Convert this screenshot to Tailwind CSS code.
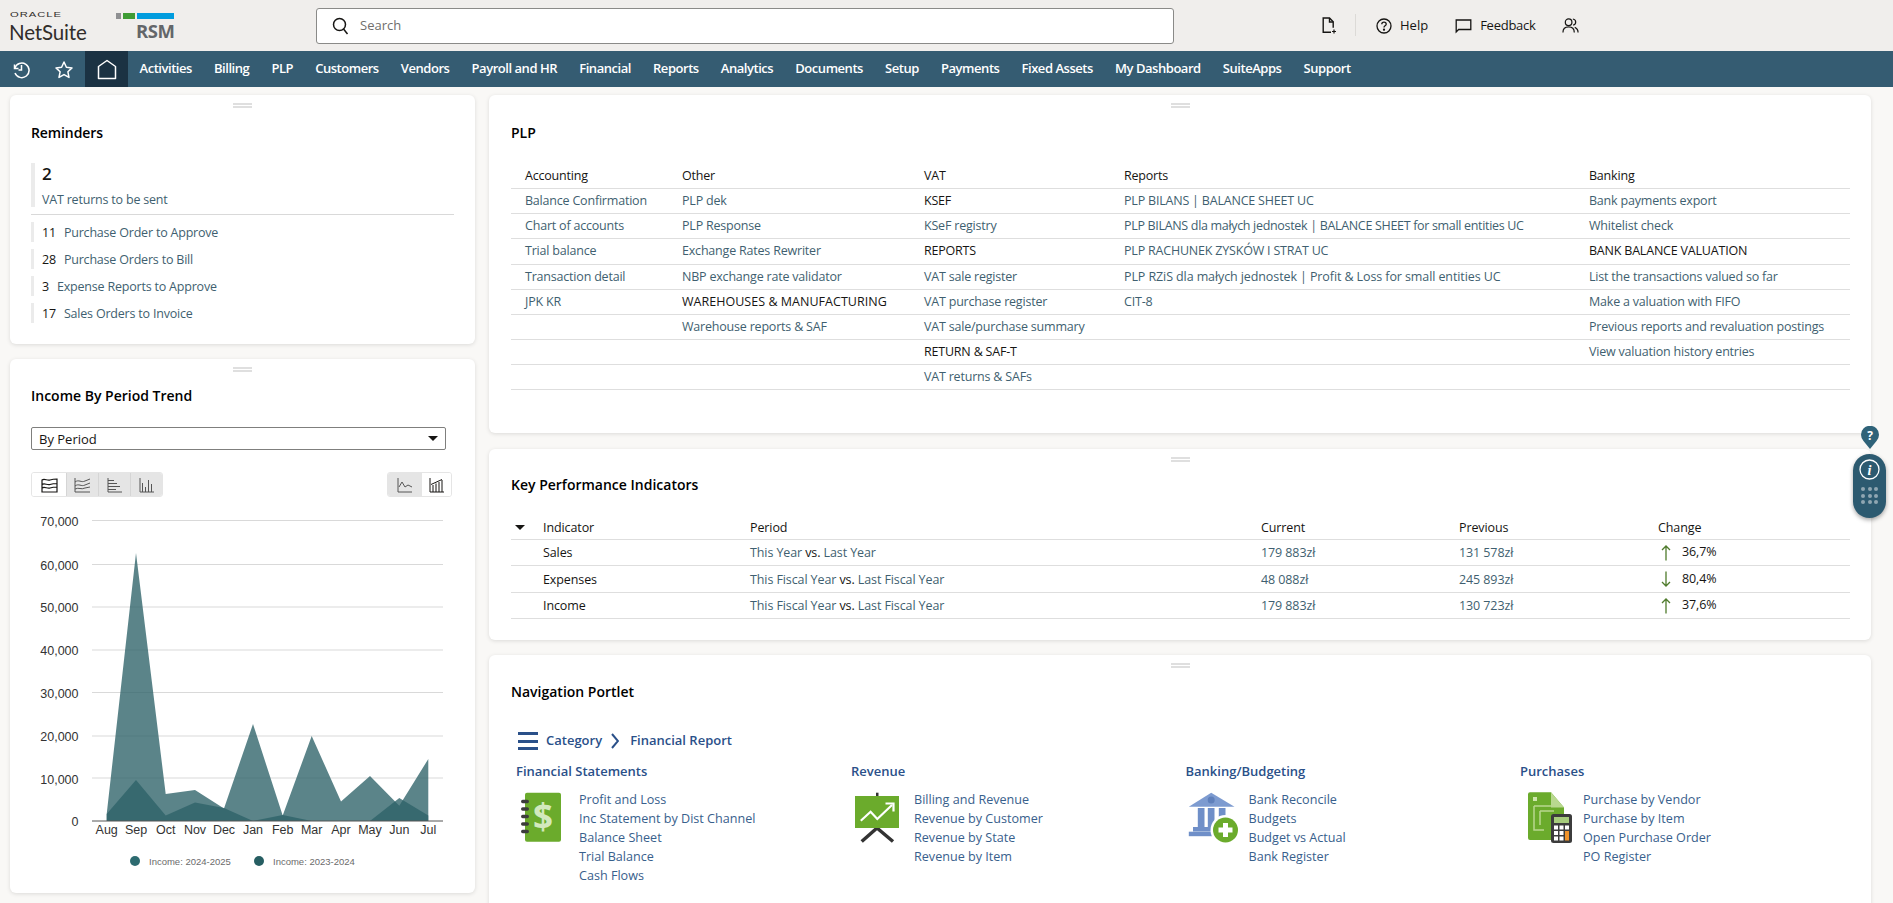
<!DOCTYPE html>
<html lang="en">
<head>
<meta charset="utf-8">
<title>NetSuite Home</title>
<script src="https://cdn.jsdelivr.net/npm/@tailwindcss/browser@4"></script>
</head>
<body class="h-[903px] overflow-hidden bg-[#f9f8f6] font-['Open_Sans',sans-serif] text-[13px] text-[#161513] relative">
<!-- top bar -->
<header class="h-[51px] bg-[#f0eeec] flex items-center relative">
  <div class="w-[316px] h-full relative shrink-0 flex">
    <div class="ml-[10px] mt-[10.5px] flex flex-col">
      <span class="font-['Liberation_Sans',sans-serif] text-[8px] leading-[8px] tracking-[0.7px] text-[#312d2a] scale-x-[1.4] origin-left">ORACLE</span>
      <span class="-ml-[1px] font-['Lato',sans-serif] text-[20.5px] leading-[22px] tracking-[-0.15px] text-[#312d2a] mt-[2.500px]">NetSuite</span>
    </div>
    <div class="absolute left-[116px] top-[13px] flex gap-[2px]">
      <i class="block w-[5px] h-[6px] bg-[#8f9092]"></i><i class="block w-[12px] h-[6px] bg-[#3f9c35]"></i><i class="block w-[37px] h-[6px] bg-[#009cde]"></i>
    </div>
    <span class="absolute left-[136px] top-[20px] font-['Open_Sans',sans-serif] font-bold text-[18.5px] leading-[22px] tracking-[-0.4px] text-[#63666a]">RSM</span>
  </div>
  <div class="w-[858px] h-[36px] bg-white border border-[#8a8a88] rounded-[3px] flex items-center shrink-0">
    <svg class="ml-[15px]" width="17" height="18" viewBox="0 0 17 18" fill="none" stroke="#161513" stroke-width="1.5"><circle cx="7.5" cy="7.5" r="6"/><path d="M11.5 12l4 5"/></svg>
    <span class="ml-[11px] text-[#6f6e6c] text-[13px]">Search</span>
  </div>
  <div class="absolute left-[1322px] top-[17px] w-[15px] h-[17px]">
    <svg width="15" height="17" viewBox="0 0 15 17" fill="none" stroke="#161513" stroke-width="1.4"><path d="M9 15.300H1.200V1h6.300l3.700 3.700v6"/><path d="M7.500 1v4h3.700"/><path d="M12 12.500v4M10 14.500h4" stroke-width="1.200"/></svg>
  </div>
  <div class="absolute left-[1355px] top-[14px] w-px h-[22px] bg-[#dcdad7]"></div>
  <div class="absolute left-[1376px] top-[0px] h-[51px] flex items-center">
    <svg width="16" height="16" viewBox="0 0 16 16" fill="none" stroke="#161513" stroke-width="1.3"><circle cx="8" cy="8" r="7"/><path d="M5.800 6.200c0-1.200 1-2 2.200-2s2.200.8 2.200 2c0 1.600-2.200 1.700-2.200 3.300"/><circle cx="8" cy="11.700" r=".5" fill="#161513"/></svg>
    <span class="ml-[8px] font-medium text-[13px]">Help</span>
    <svg class="ml-[27px]" width="17" height="16" viewBox="0 0 17 16" fill="none" stroke="#161513" stroke-width="1.3"><path d="M1.200 14V2h14.600v9.500H3.600L1.200 14z"/></svg>
    <span class="ml-[8px] font-medium text-[13px] tracking-[-0.25px]">Feedback</span>
    <svg class="ml-[26px]" width="17" height="17" viewBox="0 0 18 17" fill="none" stroke="#161513" stroke-width="1.3"><circle cx="7" cy="5" r="3.500"/><path d="M1 16c0-4 2.500-6 6-6s6 2 6 6"/><path d="M11.500 1.600c2 .3 3 1.700 3 3.300s-1 3-2.700 3.300M13.500 10.500c2 .8 3.500 2.500 3.500 5.500"/></svg>
  </div>
</header>

<!-- nav -->
<nav class="h-[36px] bg-[#355c72] flex items-center text-white font-semibold text-[13px]">
  <div class="w-[42px] flex justify-center">
    <svg width="19" height="19" viewBox="0 0 19 19" fill="none" stroke="#fff" stroke-width="1.5"><path d="M2.500 4.500v4h4"/><path d="M2.800 8.200A7.300 7.300 0 1 1 3 13"/><path d="M9.500 5v5H6.500"/></svg>
  </div>
  <div class="w-[43px] flex justify-center">
    <svg width="20" height="19" viewBox="0 0 20 19" fill="none" stroke="#fff" stroke-width="1.5"><path d="M10 2l2.400 5.200 5.600.7-4.100 3.900 1.100 5.600L10 14.600l-5 2.800 1.100-5.600L2 7.900l5.600-.7z" stroke-linejoin="round"/></svg>
  </div>
  <div class="w-[43px] h-full bg-[#1b3243] flex items-center justify-center">
    <svg width="20" height="21" viewBox="0 0 20 21" fill="none" stroke="#fff" stroke-width="1.5"><path d="M1.500 19.500V7.500L10 1.500l8.500 6v12z" stroke-linejoin="round"/></svg>
  </div>
  <div class="ml-[11.5px] flex gap-[22.1px] tracking-[-0.46px] whitespace-nowrap">
    <span>Activities</span><span>Billing</span><span>PLP</span><span>Customers</span><span>Vendors</span><span>Payroll and HR</span><span>Financial</span><span>Reports</span><span>Analytics</span><span>Documents</span><span>Setup</span><span>Payments</span><span>Fixed Assets</span><span>My Dashboard</span><span>SuiteApps</span><span>Support</span>
  </div>
</nav>

<!-- dashboard -->
<main class="flex gap-[14px] pl-[10px] pt-[8px]">
  <div class="w-[465px] shrink-0 flex flex-col gap-[15px]">
    <!-- Reminders -->
    <section class="h-[249px] bg-white rounded-[6px] shadow-[0_1px_4px_rgba(0,0,0,0.12)] pt-[8px] px-[21px]">
      <div class="h-[5px] w-[19px] mx-auto border-y-2 border-[#dfdfdf]"></div>
      <h2 class="mt-[15px] h-[20px] leading-[20px] text-[14px] font-semibold tracking-[-0.1px] text-black">Reminders</h2>
      <div class="mt-[20px] h-[44px] border-l-4 border-[#ebebeb] pl-[7px]">
        <div class="h-[22px] text-[17px] leading-[22px] font-semibold">2</div>
        <div class="mt-[5px] h-[19px] leading-[19px] text-[12.5px] text-[#3f5f70] tracking-[-0.2px]">VAT returns to be sent</div>
      </div>
      <div class="mt-[7px] border-t border-[#d9d9d9]"></div>
      <ul class="mt-[7px] flex flex-col gap-[7px] text-[12.5px] tracking-[-0.2px]">
        <li class="h-[20px] leading-[22px] border-l-[3px] border-[#ebebeb] pl-[8px]"><span>11</span><a class="ml-[8px] text-[#3f5f70]">Purchase Order to Approve</a></li>
        <li class="h-[20px] leading-[22px] border-l-[3px] border-[#ebebeb] pl-[8px]"><span>28</span><a class="ml-[8px] text-[#3f5f70]">Purchase Orders to Bill</a></li>
        <li class="h-[20px] leading-[22px] border-l-[3px] border-[#ebebeb] pl-[8px]"><span>3</span><a class="ml-[8px] text-[#3f5f70]">Expense Reports to Approve</a></li>
        <li class="h-[20px] leading-[22px] border-l-[3px] border-[#ebebeb] pl-[8px]"><span>17</span><a class="ml-[8px] text-[#3f5f70]">Sales Orders to Invoice</a></li>
      </ul>
    </section>
    <!-- Income -->
    <section class="h-[534px] bg-white rounded-[6px] shadow-[0_1px_4px_rgba(0,0,0,0.12)] pt-[8px] px-[21px]">
      <div class="h-[5px] w-[19px] mx-auto border-y-2 border-[#dfdfdf]"></div>
      <h2 class="mt-[14px] h-[20px] leading-[20px] text-[14px] font-semibold text-black">Income By Period Trend</h2>
      <div class="mt-[21px] w-[415px] h-[23px] border border-[#7f7f7d] rounded-[2px] flex items-center justify-between pl-[7px] pr-[7px] text-[13px]">
        <span class="pt-[3px]">By Period</span>
        <span class="w-0 h-0 border-x-[5px] border-t-[5px] border-x-transparent border-t-[#161513]"></span>
      </div>
      <div class="mt-[22px] flex justify-between w-[421px]">
        <div class="h-[25px] w-[132px] flex rounded-[3px] overflow-hidden border border-[#e5e5e5]">
          <span class="w-[34px] bg-white flex items-center justify-center"><svg width="17" height="16" viewBox="0 0 17 16" fill="none" stroke="#161513" stroke-width="1.2"><path d="M1 15V3c2.500-2 5 1 8 0s5-1 7-1v13zM1 7.500c2.500-2 5 1 8 0s5-1 7-1M1 11c2.500-2 5 1 8 0s5-1 7-1"/></svg></span>
          <span class="w-[32px] bg-[#e5e5e5] border-l border-[#d5d5d5] flex items-center justify-center"><svg width="17" height="16" viewBox="0 0 17 16" fill="none" stroke="#555" stroke-width="1"><path d="M1 1v14h15M1 5c4-3 6 1 10-1l5-2M1 9c4-3 6 1 10-1l5-2M1 12c4-2 6 1 10-1l5-1"/></svg></span>
          <span class="w-[32px] bg-[#e5e5e5] border-l border-[#d5d5d5] flex items-center justify-center"><svg width="16" height="16" viewBox="0 0 16 16" fill="none" stroke="#555" stroke-width="1"><path d="M1 1v14h14M1 3.500h6M1 6.500h9M1 9.500h12M1 12.500h8" /></svg></span>
          <span class="flex-1 bg-[#e5e5e5] border-l border-[#d5d5d5] flex items-center justify-center"><svg width="16" height="16" viewBox="0 0 16 16" fill="none" stroke="#555" stroke-width="1"><path d="M1 1v14h14M3.500 15V6M6.500 15v-5M9.500 15V3M12.500 15V7"/></svg></span>
        </div>
        <div class="h-[25px] w-[65px] flex rounded-[3px] overflow-hidden border border-[#e5e5e5]">
          <span class="w-[34px] bg-[#e5e5e5] flex items-center justify-center"><svg width="16" height="16" viewBox="0 0 16 16" fill="none" stroke="#555" stroke-width="1"><path d="M1 1v14h14M2 10l3-5 3 5 3-2 4 2"/></svg></span>
          <span class="flex-1 bg-white flex items-center justify-center"><svg width="16" height="16" viewBox="0 0 16 16" fill="none" stroke="#161513" stroke-width="1"><path d="M1 1v14h14M4 15V8M7 15V6.500M10 15V5M13 15V3M2 7.500l11-5"/></svg></span>
        </div>
      </div>
      <svg class="-ml-[21px] mt-[13px] block font-['Liberation_Sans',sans-serif]" width="465" height="370" viewBox="10 510 465 370">
        <g stroke="#d9d9d9" stroke-width="1">
          <path d="M92 520.500H443M92 564.500H443M92 607H443M92 650H443M92 692.500H443M92 736H443M92 778H443"/>
        </g>
        <g fill="#2d6168" fill-opacity=".78">
          <path d="M106.700 821V814L136 553 165.700 794 195 790 224 808.500 253 724 282.700 815.600 311.700 736 341 801.500 370 776 399.300 805.700 428.300 759V821Z"/>
          <path d="M106.700 821V814L136 780 165.700 815.600 195 802.500 224 808 253 821 282.700 815 311.700 821 341 821 370 821 399.300 798 428.300 815.600V821Z"/>
        </g>
        <path d="M92 821H443" stroke="#555" stroke-width="1"/>
        <g font-size="12.500" fill="#333" text-anchor="end">
          <text x="78.500" y="526">70,000</text><text x="78.500" y="570">60,000</text><text x="78.500" y="612">50,000</text><text x="78.500" y="655">40,000</text><text x="78.500" y="698">30,000</text><text x="78.500" y="741">20,000</text><text x="78.500" y="784">10,000</text><text x="78.500" y="826">0</text>
        </g>
        <g font-size="12.500" fill="#333" text-anchor="middle">
          <text x="106.700" y="834">Aug</text><text x="136" y="834">Sep</text><text x="165.700" y="834">Oct</text><text x="195" y="834">Nov</text><text x="224" y="834">Dec</text><text x="253" y="834">Jan</text><text x="282.700" y="834">Feb</text><text x="311.700" y="834">Mar</text><text x="341" y="834">Apr</text><text x="370" y="834">May</text><text x="399.300" y="834">Jun</text><text x="428.300" y="834">Jul</text>
        </g>
        <circle cx="135" cy="861" r="5" fill="#2d6b70"/><circle cx="259" cy="861" r="5" fill="#265e62"/>
        <g font-size="9.500" fill="#6b6b6b"><text x="149" y="864.500">Income: 2024-2025</text><text x="273" y="864.500">Income: 2023-2024</text></g>
      </svg>
    </section>
  </div>

  <div class="w-[1382px] shrink-0 flex flex-col gap-[15px]">
    <!-- PLP -->
    <section class="h-[338px] bg-white rounded-[6px] shadow-[0_1px_4px_rgba(0,0,0,0.12)] pt-[8px] pl-[22px] pr-[21px]">
      <div class="h-[5px] w-[19px] mx-auto border-y-2 border-[#dfdfdf]"></div>
      <h2 class="mt-[15px] h-[20px] leading-[20px] text-[14px] font-semibold text-black">PLP</h2>
      <div class="mt-[21px] text-[12.5px] tracking-[-0.2px] grid grid-cols-[157px_242px_200px_465px_275px] auto-rows-[25.15px] items-center text-[#3f5f70] [&>*]:h-[25.15px] [&>*]:leading-[24px] [&>*]:border-b [&>*]:border-[#dedede] [&>*]:pl-[14px] [&>*]:whitespace-nowrap">
        <b class="font-medium text-[#161513]">Accounting</b><b class="font-medium text-[#161513]">Other</b><b class="font-medium text-[#161513]">VAT</b><b class="font-medium text-[#161513]">Reports</b><b class="font-medium text-[#161513]">Banking</b>
        <a>Balance Confirmation</a><a>PLP dek</a><span class="text-[#161513]">KSEF</span><a>PLP BILANS | BALANCE SHEET UC</a><a>Bank payments export</a>
        <a>Chart of accounts</a><a>PLP Response</a><a>KSeF registry</a><a class="tracking-[-0.32px]">PLP BILANS dla małych jednostek | BALANCE SHEET for small entities UC</a><a>Whitelist check</a>
        <a>Trial balance</a><a>Exchange Rates Rewriter</a><span class="text-[#161513]">REPORTS</span><a>PLP RACHUNEK ZYSKÓW I STRAT UC</a><span class="text-[#161513]">BANK BALANCE VALUATION</span>
        <a>Transaction detail</a><a>NBP exchange rate validator</a><a>VAT sale register</a><a class="tracking-[-0.1px]">PLP RZiS dla małych jednostek | Profit &amp; Loss for small entities UC</a><a>List the transactions valued so far</a>
        <a>JPK KR</a><span class="text-[#161513] tracking-[0.03px]">WAREHOUSES &amp; MANUFACTURING</span><a>VAT purchase register</a><a>CIT-8</a><a>Make a valuation with FIFO</a>
        <a></a><a>Warehouse reports &amp; SAF</a><a>VAT sale/purchase summary</a><a></a><a>Previous reports and revaluation postings</a>
        <a></a><a></a><span class="text-[#161513]">RETURN &amp; SAF-T</span><a></a><a>View valuation history entries</a>
        <a></a><a></a><a>VAT returns &amp; SAFs</a><a></a><a></a>
      </div>
    </section>
    <!-- KPI -->
    <section class="mt-[1px] h-[191px] bg-white rounded-[6px] shadow-[0_1px_4px_rgba(0,0,0,0.12)] pt-[8px] pl-[22px] pr-[21px]">
      <div class="h-[5px] w-[19px] mx-auto border-y-2 border-[#dfdfdf]"></div>
      <h2 class="mt-[13px] h-[20px] leading-[20px] text-[14px] font-semibold text-black">Key Performance Indicators</h2>
      <div class="mt-[21px] text-[12.5px] tracking-[-0.1px] text-[#161513] grid grid-cols-[32px_207px_511px_198px_199px_192px] whitespace-nowrap [&>*]:border-b [&>*]:border-[#dedede]">
        <div class="h-[24px] flex items-center pl-[4px]"><span class="w-0 h-0 border-x-[5px] border-t-[5px] border-x-transparent border-t-[#161513]"></span></div><div class="h-[24px] leading-[23px] font-medium">Indicator</div><div class="h-[24px] leading-[23px] font-medium">Period</div><div class="h-[24px] leading-[23px] font-medium">Current</div><div class="h-[24px] leading-[23px] font-medium">Previous</div><div class="h-[24px] leading-[23px] font-medium">Change</div>
        <div class="h-[26px]"></div><div class="h-[26px] leading-[26px]">Sales</div><div class="h-[26px] leading-[26px]"><a class="text-[#3f5f70]">This Year</a> vs. <a class="text-[#3f5f70]">Last Year</a></div><div class="h-[26px] leading-[26px] text-[#3f5f70]">179 883zł</div><div class="h-[26px] leading-[26px] text-[#3f5f70]">131 578zł</div>
        <div class="h-[26px] flex items-center"><svg class="ml-[3px] mr-[11px]" width="10" height="16" viewBox="0 0 10 16" fill="none" stroke="#4f7b2c" stroke-width="1.3"><path d="M5 15.500V1M1 5l4-4 4 4"/></svg>36,7%</div>
        <div class="h-[27px]"></div><div class="h-[27px] leading-[27px]">Expenses</div><div class="h-[27px] leading-[27px]"><a class="text-[#3f5f70]">This Fiscal Year</a> vs. <a class="text-[#3f5f70]">Last Fiscal Year</a></div><div class="h-[27px] leading-[27px] text-[#3f5f70]">48 088zł</div><div class="h-[27px] leading-[27px] text-[#3f5f70]">245 893zł</div>
        <div class="h-[27px] flex items-center"><svg class="ml-[3px] mr-[11px]" width="10" height="16" viewBox="0 0 10 16" fill="none" stroke="#4f7b2c" stroke-width="1.3"><path d="M5 .500V15M1 11l4 4 4-4"/></svg>80,4%</div>
        <div class="h-[26px]"></div><div class="h-[26px] leading-[26px]">Income</div><div class="h-[26px] leading-[26px]"><a class="text-[#3f5f70]">This Fiscal Year</a> vs. <a class="text-[#3f5f70]">Last Fiscal Year</a></div><div class="h-[26px] leading-[26px] text-[#3f5f70]">179 883zł</div><div class="h-[26px] leading-[26px] text-[#3f5f70]">130 723zł</div>
        <div class="h-[26px] flex items-center"><svg class="ml-[3px] mr-[11px]" width="10" height="16" viewBox="0 0 10 16" fill="none" stroke="#4f7b2c" stroke-width="1.3"><path d="M5 15.500V1M1 5l4-4 4 4"/></svg>37,6%</div>
      </div>
    </section>
    <!-- Nav portlet -->
    <section class="h-[260px] bg-white rounded-[6px] shadow-[0_1px_4px_rgba(0,0,0,0.12)] pt-[8px] pl-[22px] pr-[21px]">
      <div class="h-[5px] w-[19px] mx-auto border-y-2 border-[#dfdfdf]"></div>
      <h2 class="mt-[14px] h-[20px] leading-[20px] text-[14px] font-semibold text-black">Navigation Portlet</h2>
      <div class="mt-[29px] h-[20px] flex items-center text-[#2a5089] font-semibold text-[13px]">
        <span class="ml-[7px] w-[20px] h-[18px] flex flex-col justify-between"><i class="block h-[3px] bg-[#2a5089]"></i><i class="block h-[3px] bg-[#2a5089]"></i><i class="block h-[3px] bg-[#2a5089]"></i></span>
        <span class="ml-[8px]">Category</span>
        <svg class="ml-[9px] mr-[11px]" width="8" height="16" viewBox="0 0 8 16" fill="none" stroke="#2a5089" stroke-width="2"><path d="M1 1l6 7-6 7"/></svg>
        <span>Financial Report</span>
      </div>
      <div class="mt-[10px] ml-[5px] grid grid-cols-[335px_334.500px_334.500px_334px] text-[12.6px]">
        <div>
          <h3 class="h-[20px] leading-[20px] font-semibold text-[13px] text-[#2a5089]">Financial Statements</h3>
          <div class="mt-[9px] flex">
            <svg class="shrink-0 -mt-[1px]" width="63" height="56" viewBox="0 0 63 56"><rect x="9" y="3.700" width="36" height="49" rx="2" fill="#6bab2c"/><g fill="#3c3c3c"><rect x="5" y="10.700" width="8" height="3.500" rx="1.700"/><rect x="5" y="18.200" width="8" height="3.500" rx="1.700"/><rect x="5" y="25.700" width="8" height="3.500" rx="1.700"/><rect x="5" y="33.200" width="8" height="3.500" rx="1.700"/><rect x="5" y="40.700" width="8" height="3.500" rx="1.700"/></g><text x="27" y="40" text-anchor="middle" font-family="Open Sans" font-weight="700" font-size="35" fill="#d3e9bd">$</text></svg>
            <div class="flex flex-col leading-[19px] text-[#38608c]"><a>Profit and Loss</a><a>Inc Statement by Dist Channel</a><a>Balance Sheet</a><a>Trial Balance</a><a>Cash Flows</a></div>
          </div>
        </div>
        <div>
          <h3 class="h-[20px] leading-[20px] font-semibold text-[13px] text-[#2a5089]">Revenue</h3>
          <div class="mt-[9px] flex">
            <svg class="shrink-0 -mt-[1px]" width="63" height="56" viewBox="0 0 63 56"><rect x="25" y="3.700" width="2.500" height="4" fill="#333"/><path d="M26 39L10.700 52.500M26 39L42 52.500" stroke="#333" stroke-width="3.500" fill="none"/><rect x="4" y="7" width="44" height="32" fill="#6bab2c"/><path d="M9.800 31.700L19.600 22.700l6.700 7.300L41 16" stroke="#fff" stroke-width="2.200" fill="none"/><path d="M34.500 14.500H42.500V22.500" stroke="#fff" stroke-width="2.200" fill="none"/></svg>
            <div class="flex flex-col leading-[19px] text-[#38608c]"><a>Billing and Revenue</a><a>Revenue by Customer</a><a>Revenue by State</a><a>Revenue by Item</a></div>
          </div>
        </div>
        <div>
          <h3 class="h-[20px] leading-[20px] font-semibold text-[13px] text-[#2a5089]">Banking/Budgeting</h3>
          <div class="mt-[9px] flex">
            <svg class="shrink-0 -mt-[1px]" width="63" height="56" viewBox="0 0 63 56"><path d="M25.200 3.700L48.500 17.700H2.800z" fill="#7d9bd0"/><circle cx="25.200" cy="11" r="3.500" fill="#5f80bb"/><g fill="#6f8fc8"><rect x="11.800" y="19" width="6.700" height="19"/><rect x="21.800" y="19" width="6.700" height="19"/><rect x="32.800" y="19" width="6.700" height="14"/><rect x="7" y="38" width="28" height="4.500"/><rect x="2.800" y="42.700" width="34" height="4.500"/></g><circle cx="39.500" cy="41" r="15" fill="#fff"/><circle cx="39.500" cy="41" r="12.500" fill="#6bab2c"/><path d="M39.500 34v14M32.500 41h14" stroke="#fff" stroke-width="5"/></svg>
            <div class="flex flex-col leading-[19px] text-[#38608c]"><a>Bank Reconcile</a><a>Budgets</a><a>Budget vs Actual</a><a>Bank Register</a></div>
          </div>
        </div>
        <div>
          <h3 class="h-[20px] leading-[20px] font-semibold text-[13px] text-[#2a5089]">Purchases</h3>
          <div class="mt-[9px] flex">
            <svg class="shrink-0 -mt-[1px]" width="63" height="56" viewBox="0 0 63 56"><path d="M10 3.300H31L44 18.500V51H10a2 2 0 0 1-2-2V5.300a2 2 0 0 1 2-2z" fill="#6bab2c"/><path d="M31 3.300L44 18.500H31z" fill="#b9d88f"/><rect x="13" y="8" width="4" height="4" fill="#cfe6ae"/><path d="M14 17h20M14 17v24h10M20 22h14M20 22v14" stroke="#b9d88f" stroke-width="1.500" fill="none"/><rect x="31" y="25" width="21" height="29" rx="2.500" fill="#3c3c3c"/><rect x="34" y="28" width="15" height="6" fill="#a6cc7c"/><g fill="#fff"><rect x="34" y="36.500" width="4" height="4"/><rect x="39.500" y="36.500" width="4" height="4"/><rect x="45" y="36.500" width="4" height="4"/><rect x="34" y="42" width="4" height="4"/><rect x="39.500" y="42" width="4" height="4"/><rect x="34" y="47.500" width="4" height="4"/><rect x="39.500" y="47.500" width="4" height="4"/></g><rect x="45" y="42" width="4" height="9.500" fill="#f0932b"/></svg>
            <div class="flex flex-col leading-[19px] text-[#38608c]"><a>Purchase by Vendor</a><a>Purchase by Item</a><a>Open Purchase Order</a><a>PO Register</a></div>
          </div>
        </div>
      </div>
    </section>
  </div>
</main>

<!-- floating help widget -->
<div class="absolute left-[1853px] top-[426px] w-[33px] flex flex-col items-center">
  <svg width="18" height="23" viewBox="0 0 18 23"><path d="M9 23L2.500 15A9 9 0 1 1 15.500 15z" fill="#2f6379"/><text x="9" y="13.500" text-anchor="middle" font-family="Open Sans" font-weight="700" font-size="12" fill="#fff">?</text></svg>
  <div class="mt-[5px] w-[33px] h-[64px] rounded-[17px] bg-[#2c5a70] shadow-[0_2px_4px_rgba(0,0,0,0.35)] flex flex-col items-center pt-[5px]">
    <svg width="21" height="21" viewBox="0 0 21 21" fill="none"><circle cx="10.500" cy="10.500" r="9.500" stroke="#fff" stroke-width="1.300"/><text x="10.500" y="15.500" text-anchor="middle" font-family="Liberation Serif" font-style="italic" font-weight="700" font-size="14" fill="#fff">i</text></svg>
    <div class="mt-[7px] grid grid-cols-3 gap-[2.500px]">
      <i class="block w-[4px] h-[4px] rounded-full bg-[#8fa6b2]"></i><i class="block w-[4px] h-[4px] rounded-full bg-[#8fa6b2]"></i><i class="block w-[4px] h-[4px] rounded-full bg-[#8fa6b2]"></i><i class="block w-[4px] h-[4px] rounded-full bg-[#8fa6b2]"></i><i class="block w-[4px] h-[4px] rounded-full bg-[#8fa6b2]"></i><i class="block w-[4px] h-[4px] rounded-full bg-[#8fa6b2]"></i><i class="block w-[4px] h-[4px] rounded-full bg-[#8fa6b2]"></i><i class="block w-[4px] h-[4px] rounded-full bg-[#8fa6b2]"></i><i class="block w-[4px] h-[4px] rounded-full bg-[#8fa6b2]"></i>
    </div>
  </div>
</div>
</body>
</html>
